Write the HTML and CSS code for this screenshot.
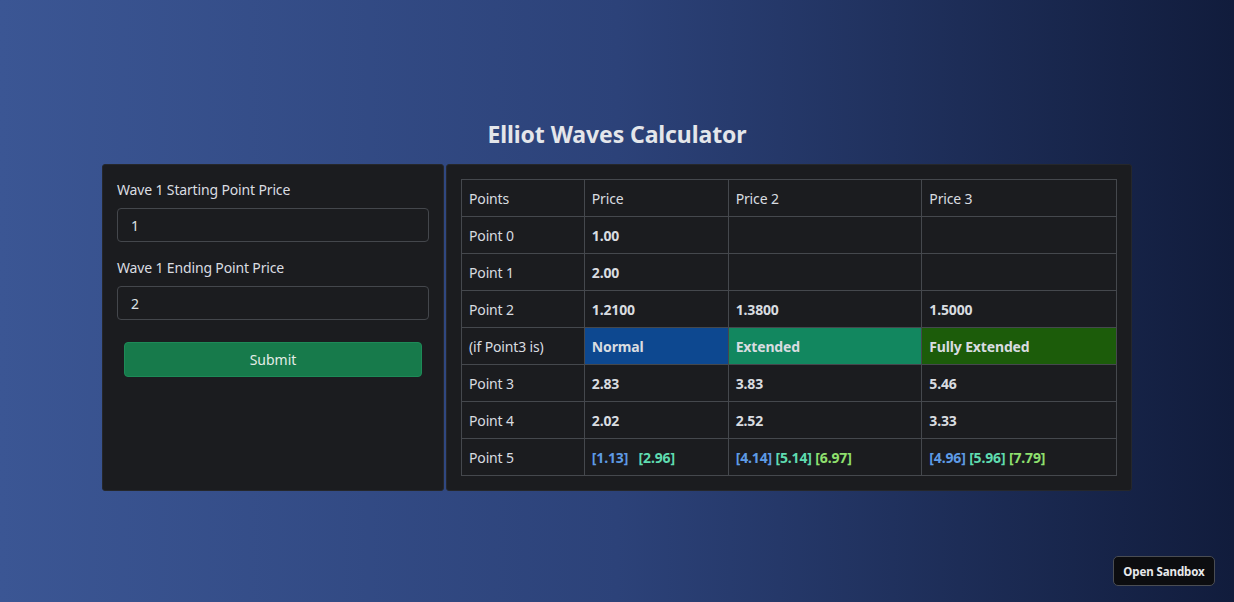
FILE: index.html
```html
<!DOCTYPE html>
<html lang="en">
<head>
<meta charset="utf-8">
<title>Elliot Waves Calculator</title>
<link rel="stylesheet" href="styles.css">
</head>
<body>
<main class="page">
  <h1 class="title">Elliot Waves Calculator</h1>
  <div class="layout">
    <section class="card form-card">
      <label class="field-label" for="start">Wave 1 Starting Point Price</label>
      <input class="field-input" id="start" type="text" value="1">
      <label class="field-label second" for="end">Wave 1 Ending Point Price</label>
      <input class="field-input" id="end" type="text" value="2">
      <button class="submit" type="button">Submit</button>
    </section>
    <section class="card table-card">
      <table class="waves">
        <colgroup>
          <col class="c1"><col class="c2"><col class="c3"><col class="c4">
        </colgroup>
        <tr><td>Points</td><td>Price</td><td>Price 2</td><td>Price 3</td></tr>
        <tr><td>Point 0</td><td class="b">1.00</td><td></td><td></td></tr>
        <tr><td>Point 1</td><td class="b">2.00</td><td></td><td></td></tr>
        <tr><td>Point 2</td><td class="b">1.2100</td><td class="b">1.3800</td><td class="b">1.5000</td></tr>
        <tr><td>(if Point3 is)</td><td class="b normal">Normal</td><td class="b extended">Extended</td><td class="b fully">Fully Extended</td></tr>
        <tr><td>Point 3</td><td class="b">2.83</td><td class="b">3.83</td><td class="b">5.46</td></tr>
        <tr><td>Point 4</td><td class="b">2.02</td><td class="b">2.52</td><td class="b">3.33</td></tr>
        <tr><td>Point 5</td>
          <td class="b"><span class="t-blue">[1.13]</span>&nbsp;&nbsp;&nbsp;<span class="t-teal">[2.96]</span></td>
          <td class="b"><span class="t-blue">[4.14]</span> <span class="t-teal">[5.14]</span> <span class="t-lime">[6.97]</span></td>
          <td class="b"><span class="t-blue">[4.96]</span> <span class="t-teal">[5.96]</span> <span class="t-lime">[7.79]</span></td>
        </tr>
      </table>
    </section>
  </div>
</main>
<button class="sandbox" type="button">Open Sandbox</button>
</body>
</html>
```

FILE: styles.css
```css
* { box-sizing: border-box; }
html, body { margin: 0; height: 100%; }
body {
  background: linear-gradient(to right, #3b5694 0%, #2c4279 50%, #111c3c 100%);
  font-family: "Noto Sans", "Open Sans", sans-serif;
  color: #dee2e6;
  font-size: 14px;
  letter-spacing: -0.15px;
  overflow: hidden;
}
.page {
  padding-top: 118px;
}
.title {
  margin: 0 0 14px;
  text-align: center;
  font-size: 23px;
  font-weight: 700;
  line-height: 32px;
  letter-spacing: -0.1px;
  color: #e4e6ea;
}
.layout {
  display: flex;
  gap: 2px;
  width: 1030px;
  margin: 0 auto;
}
.card {
  background: #1b1c1f;
  border: 1px solid #25272b;
  border-radius: 3px;
  height: 327px;
}
.form-card {
  width: 342px;
  padding: 14px 14px;
  display: flex;
  flex-direction: column;
}
.field-label {
  line-height: 22px;
  color: #dadde1;
  margin-bottom: 7px;
}
.field-label.second { margin-top: 15px; }
.field-input {
  height: 34px;
  width: 100%;
  background: #1b1c1f;
  border: 1px solid #44474c;
  border-radius: 4px;
  color: #dee2e6;
  font: inherit;
  padding: 0 13px;
}
.submit {
  margin: 22px 7px 0;
  height: 35px;
  background: #177a4b;
  border: 1px solid #1d8a57;
  border-radius: 4px;
  color: #e3ede7;
  font: inherit;
}
.table-card {
  width: 686px;
  padding: 14px 14px;
}
.waves {
  width: 656px;
  border-collapse: collapse;
}
.c1 { width: 123px; }
.c2 { width: 144px; }
.c3 { width: 194px; }
.c4 { width: 195px; }
.waves td {
  border: 1px solid #45484d;
  height: 37px;
  padding: 0 7px;
  color: #d9dce0;
  vertical-align: middle;
}
.waves td.b { font-weight: 700; }
.waves td.normal { background: #0d4890; }
.waves td.extended { background: #12875f; }
.waves td.fully { background: #1c5c0a; }
.t-blue { color: #5e9be6; }
.t-teal { color: #5fdcb0; }
.t-lime { color: #8fe06e; }
.sandbox {
  position: fixed;
  right: 19px;
  bottom: 16px;
  width: 102px;
  height: 30px;
  background: #0c0d10;
  border: 1px solid #4a4d53;
  border-radius: 5px;
  color: #e8e9eb;
  font-family: "Noto Sans", sans-serif;
  font-size: 11.5px;
  letter-spacing: -0.1px;
  font-weight: 700;
  padding: 0;
}
```
